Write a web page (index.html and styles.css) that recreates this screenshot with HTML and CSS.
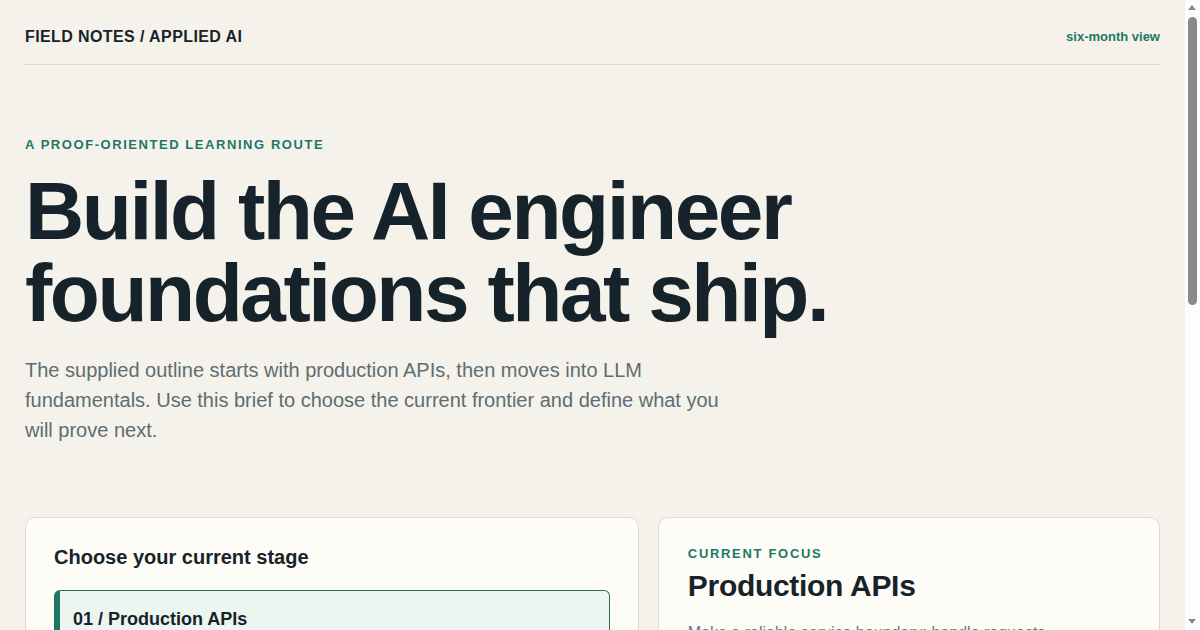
FILE: index.html
```html
<!DOCTYPE html>
<html>

<head>
  <title>Field Notes / Applied AI</title>
  <link rel="stylesheet" href="styles.css">
</head>

<body>
  <div class="page">
    <header class="topbar">
      <span class="brand">FIELD NOTES / APPLIED AI</span>
      <a class="view-link" href="#">six-month view</a>
    </header>

    <section class="hero">
      <p class="eyebrow">A PROOF-ORIENTED LEARNING ROUTE</p>
      <h1>Build the AI engineer<br>foundations that ship.</h1>
      <p class="lead">The supplied outline starts with production APIs, then moves into LLM fundamentals. Use this brief
        to choose the current frontier and define what you will prove next.</p>
    </section>

    <section class="panels">
      <div class="card stage-card">
        <h2>Choose your current stage</h2>
        <div class="stage active">
          <span class="stage-title">01 / Production APIs</span>
        </div>
      </div>

      <div class="card focus-card">
        <p class="focus-label">CURRENT FOCUS</p>
        <h3>Production APIs</h3>
        <p class="focus-text">Make a reliable service boundary; handle requests, validation, errors and retries before
          a model sits behind it.</p>
      </div>
    </section>
  </div>

  <div class="scrollbar">
    <span class="arrow-up"></span>
    <span class="thumb"></span>
    <span class="arrow-down"></span>
  </div>
</body>

</html>
```

FILE: styles.css
```css
* {
  box-sizing: border-box;
}

body {
  margin: 0;
  background-color: #f4f2eb;
  color: #17232b;
  font-family: "Liberation Sans", Arial, sans-serif;
}

.page {
  padding: 0 40px 0 25px;
}

.topbar {
  display: flex;
  justify-content: space-between;
  align-items: center;
  height: 65px;
  padding-top: 9px;
  border-bottom: 1px solid #d9dad3;
}

.brand {
  font-size: 16px;
  font-weight: bold;
  letter-spacing: 0.025em;
}

.view-link {
  color: #1d7766;
  font-size: 13px;
  font-weight: bold;
  text-decoration: none;
}

.hero {
  padding-top: 72px;
}

.eyebrow {
  margin: 0;
  color: #1d7766;
  font-size: 13px;
  font-weight: bold;
  letter-spacing: 0.12em;
}

h1 {
  margin: 18px 0 0;
  font-size: 82px;
  line-height: 82px;
  letter-spacing: -0.03em;
  font-weight: bold;
}

.lead {
  margin: 21px 0 0;
  max-width: 720px;
  font-size: 20px;
  line-height: 30px;
  color: #5e6d72;
}

.panels {
  display: grid;
  grid-template-columns: 11fr 9fr;
  gap: 19px;
  margin-top: 72px;
}

.card {
  background-color: #fdfcf7;
  border: 1px solid #dcdcd3;
  border-radius: 10px;
  min-height: 200px;
}

.stage-card {
  padding: 28px 28px;
}

.stage-card h2 {
  margin: 0 0 21px;
  font-size: 20px;
  font-weight: bold;
}

.stage {
  background-color: #edf5f0;
  border: 1px solid #2c6b62;
  border-left: 6px solid #1d7766;
  border-radius: 6px;
  padding: 18px 13px;
}

.stage-title {
  font-size: 18px;
  font-weight: bold;
}

.focus-card {
  padding: 28px 29px;
}

.focus-label {
  margin: 0;
  color: #1d7766;
  font-size: 13px;
  font-weight: bold;
  letter-spacing: 0.13em;
}

.focus-card h3 {
  margin: 8px 0 0;
  font-size: 30px;
  letter-spacing: -0.01em;
  font-weight: bold;
}

.focus-text {
  margin: 17px 0 0;
  max-width: 390px;
  color: #6b777b;
  font-size: 16px;
  line-height: 25px;
}

/* static picture of the window scrollbar */
.scrollbar {
  position: fixed;
  top: 0;
  right: 0;
  width: 15px;
  height: 100vh;
  background-color: #fdfdfd;
}

.thumb {
  position: absolute;
  top: 17px;
  left: 3px;
  width: 9px;
  height: 288px;
  border-radius: 5px;
  background-color: #8a8a8a;
}

.arrow-up,
.arrow-down {
  position: absolute;
  left: 3px;
  width: 0;
  height: 0;
  border-left: 4.5px solid transparent;
  border-right: 4.5px solid transparent;
}

.arrow-up {
  top: 5px;
  border-bottom: 5px solid #8a8a8a;
}

.arrow-down {
  bottom: 6px;
  border-top: 5px solid #8a8a8a;
}
```
